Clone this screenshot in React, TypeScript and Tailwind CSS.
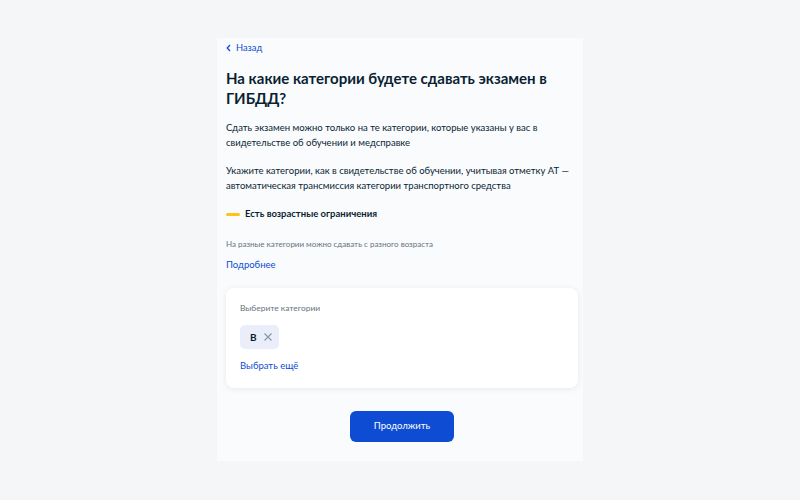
import React from 'react';

const font = { fontFamily: 'Lato, "Noto Sans", sans-serif' };

export default function App() {
  return (
    <div className="w-[800px] h-[500px] bg-[#f5f6f8] flex justify-center pt-[38px]" style={font}>
      <div className="w-[366px] h-[423px] bg-[#f9fbfd] pl-[9px] pr-[5px] pt-[3px]">
        {/* back link */}
        <div className="flex items-center gap-[5px] text-[#0d4cd3] text-[9.3px] leading-[14px]">
          <svg width="5" height="8" viewBox="0 0 5 8" fill="none">
            <path d="M4 1L1.2 4L4 7" stroke="#0d4cd3" strokeWidth="1.3" />
          </svg>
          <span>Назад</span>
        </div>

        <h1 className="mt-[13px] text-[15px] leading-[20px] font-bold text-[#0b1f33]">
          На какие категории будете сдавать экзамен в ГИБДД?
        </h1>

        <p className="mt-[12px] text-[9.5px] leading-[15px] text-[#0b1f33]">
          Сдать экзамен можно только на те категории, которые указаны у вас в свидетельстве об обучении и медсправке
        </p>
        <p className="mt-[13px] text-[9.5px] leading-[15px] text-[#0b1f33]">
          Укажите категории, как в свидетельстве об обучении, учитывая отметку АТ — автоматическая трансмиссия категории транспортного средства
        </p>

        <div className="mt-[14px] flex items-center gap-[5px]">
          <div className="w-[14px] h-[3px] rounded-full bg-[#fcc419]" />
          <span className="text-[9.5px] leading-[14px] font-bold text-[#0b1f33]">Есть возрастные ограничения</span>
        </div>

        <p className="mt-[17px] text-[8px] leading-[12px] text-[#66727f]">
          На разные категории можно сдавать с разного возраста
        </p>
        <div className="mt-[8px] text-[9.5px] leading-[14px] text-[#0d4cd3]">Подробнее</div>

        <div className="mt-[16px] w-[352px] bg-white rounded-[8px] shadow-[0_1px_6px_rgba(11,31,51,0.08)] px-[14px] pt-[14px] pb-[15px]">
          <div className="text-[8.4px] leading-[12px] text-[#66727f]">Выберите категории</div>
          <div className="mt-[11px] inline-flex items-center gap-[7px] h-[24px] pl-[10px] pr-[7px] rounded-[5px] bg-[#e9eefa]">
            <span className="text-[10px] font-bold text-[#0b1f33]">B</span>
            <svg width="8" height="8" viewBox="0 0 8 8">
              <path d="M0.5 0.5L7.5 7.5M7.5 0.5L0.5 7.5" stroke="#8a96a3" strokeWidth="1.1" />
            </svg>
          </div>
          <div className="mt-[10px] text-[9.5px] leading-[14px] text-[#0d4cd3]">Выбрать ещё</div>
        </div>

        <div className="mt-[23px] flex justify-center">
          <button className="w-[104px] h-[31px] rounded-[6px] bg-[#0d4cd3] text-white text-[9.5px]">
            Продолжить
          </button>
        </div>
      </div>
    </div>
  );
}
